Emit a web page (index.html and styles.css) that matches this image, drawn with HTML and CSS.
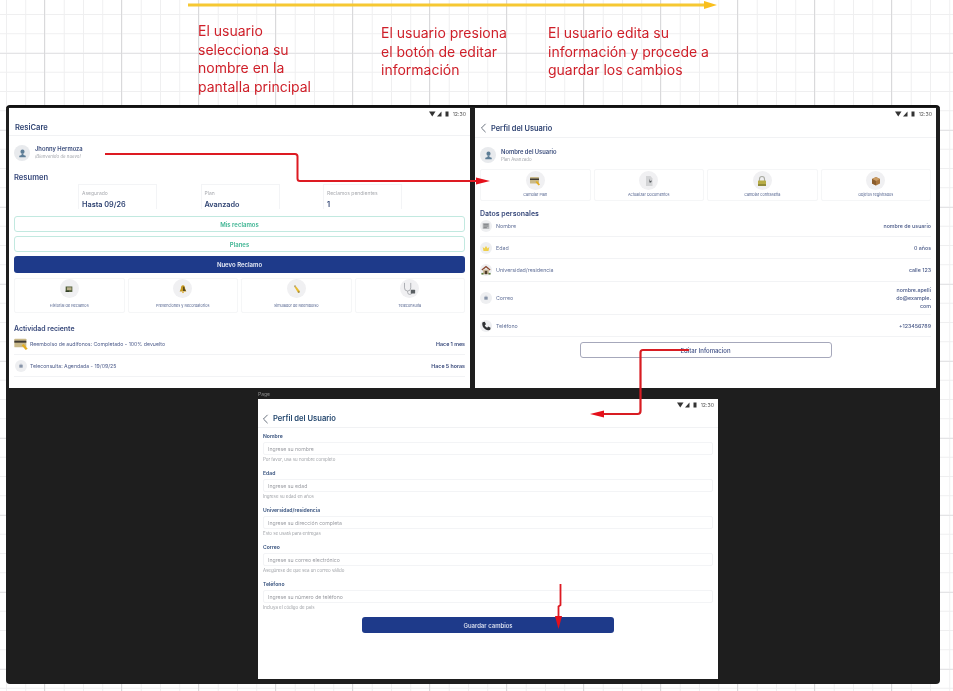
FILE: index.html
```html
<!DOCTYPE html>
<html lang="es">
<head>
    <meta charset="UTF-8">
    <meta name="viewport" content="width=device-width, initial-scale=1.0">
    <title>Flujo editar perfil</title>
    <link rel="stylesheet" href="styles.css">
</head>
<body>
    <svg class="defs" width="0" height="0">
        <symbol id="i-user" viewBox="0 0 24 24"><circle cx="12" cy="8" r="4.5" fill="#5d7d96"/><path d="M10 12h4v3l5 2v3H5v-3l5-2z" fill="#5d7d96"/></symbol>
        <symbol id="i-book" viewBox="0 0 24 24"><rect x="4" y="6" width="16" height="13" fill="#4c5a35"/><rect x="7" y="8" width="11" height="7" fill="#b9b08c"/><rect x="4" y="16" width="8" height="3" fill="#2e3a26"/></symbol>
        <symbol id="i-bell" viewBox="0 0 24 24"><path d="M12 3c4 0 5 4 5 8l3 7H4l3-7c0-4 1-8 5-8z" fill="#c79a22"/><path d="M12 6v11h7l-3-6c0-3-1-5-4-5z" fill="#5a4a1c"/><circle cx="12" cy="20" r="2" fill="#d9a520"/></symbol>
        <symbol id="i-pencil" viewBox="0 0 24 24"><path d="M7 5l3-2 11 14-1 4-4-1z" fill="#e5b92f"/><path d="M7 5l3-2 2 2.5-3 2z" fill="#a8a39a"/><path d="M16 20l4-3 0 4z" fill="#6b5a2a"/></symbol>
        <symbol id="i-steth" viewBox="0 0 24 24"><path d="M4 3v8a5 5 0 0 0 10 0V3M9 16v2a3.500 3.500 0 0 0 7 0" fill="none" stroke="#a3a6aa" stroke-width="1.400"/><rect x="14" y="14" width="7" height="6" rx="1" fill="#5a5f63"/></symbol>
        <symbol id="i-card" viewBox="0 0 24 24"><rect x="2" y="4" width="18" height="13" rx="1" fill="#c9b98a"/><rect x="2" y="7" width="18" height="3" fill="#3f3a33"/><path d="M13 14l3-2 6 7-3 2z" fill="#e3ad1f"/></symbol>
        <symbol id="i-doc" viewBox="0 0 24 24"><path d="M6 2h9l4 5v15H6z" fill="#d3d4d6"/><path d="M12 7l2 5 4-1-2 4h-3z" fill="#55585c"/></symbol>
        <symbol id="i-lock" viewBox="0 0 24 24"><path d="M7 12V8a5 5 0 0 1 10 0v4" fill="none" stroke="#a9aaa0" stroke-width="2.200"/><rect x="4" y="11" width="16" height="11" rx="1" fill="#b8ad47"/><rect x="4" y="18" width="16" height="4" fill="#8f8a3a"/></symbol>
        <symbol id="i-box" viewBox="0 0 24 24"><path d="M12 4l8 4v9l-8 4-8-4V8z" fill="#a8743c"/><path d="M12 4l8 4-8 4-8-4z" fill="#c99b63"/><path d="M12 12v9l-8-4V8z" fill="#8a5c2c"/></symbol>
        <symbol id="i-lines" viewBox="0 0 24 24"><rect x="4" y="5" width="16" height="14" fill="#b9bbbe"/><path d="M6 8h12M6 12h12M6 16h8" stroke="#63666a" stroke-width="1.600"/></symbol>
        <symbol id="i-crown" viewBox="0 0 24 24"><path d="M4 9l4 4 4-6 4 6 4-4-2 10H6z" fill="#efcf4a"/></symbol>
        <symbol id="i-house" viewBox="0 0 24 24"><path d="M1 11L12 2l11 9-2 2-9-7-9 7z" fill="#8b4a32"/><rect x="5" y="11" width="14" height="11" fill="#cdbb9a"/><rect x="9" y="14" width="6" height="8" fill="#4d3b2a"/><rect x="1" y="19" width="5" height="4" fill="#5c7a3c"/><rect x="18" y="19" width="5" height="4" fill="#5c7a3c"/></symbol>
        <symbol id="i-dot" viewBox="0 0 24 24"><rect x="8" y="9" width="8" height="7" fill="#8794a8"/><path d="M9 9l3-2 3 2" fill="none" stroke="#8794a8"/></symbol>
        <symbol id="i-phone" viewBox="0 0 24 24"><path d="M4 3l5-1 3 6-3 2c1 3 3 5 6 6l2-3 6 3-1 5c-1 1-3 1-5 1C9 21 3 14 3 7c0-2 0-3 1-4z" fill="#2f3134"/></symbol>
        <symbol id="i-status" viewBox="0 0 20 6"><path d="M0 .500h6.500L3.250 5.500z" fill="#333"/><path d="M8 5.500l4.500-5v5z" fill="#333"/><rect x="16.500" y=".500" width="3" height="5" fill="#333"/></symbol>
    </svg>

    <div class="canvas">
        <p class="note note-a">El usuario<br>selecciona su<br>nombre en la<br>pantalla principal</p>
        <p class="note note-b">El usuario presiona<br>el botón de editar<br>información</p>
        <p class="note note-c">El usuario edita su<br>información y procede a<br>guardar los cambios</p>

        <div class="board">
            <span class="page-label">Page</span>

            <!-- pantalla principal -->
            <section class="screen screen-home">
                <div class="status"><svg class="status-icons"><use href="#i-status"/></svg><span>12:30</span></div>
                <header class="appbar appbar-home"><h1>ResiCare</h1></header>
                <div class="content">
                    <div class="user user-home">
                        <span class="avatar"><svg><use href="#i-user"/></svg></span>
                        <div>
                            <div class="user-name">Jhonny Hermoza</div>
                            <div class="user-sub user-sub-i">¡Bienvenido de nuevo!</div>
                        </div>
                    </div>
                    <h2 class="title title-resumen">Resumen</h2>
                    <div class="stats">
                        <div class="stat"><span>Asegurado</span><b>Hasta 09/26</b></div>
                        <div class="stat"><span>Plan</span><b>Avanzado</b></div>
                        <div class="stat"><span>Reclamos pendientes</span><b>1</b></div>
                    </div>
                    <div class="actions">
                        <a class="btn btn-teal">Mis reclamos</a>
                        <a class="btn btn-teal">Planes</a>
                        <a class="btn btn-navy btn-new">Nuevo Reclamo</a>
                    </div>
                    <div class="tiles tiles-home">
                        <div class="tile"><span class="tile-icon"><svg><use href="#i-book"/></svg></span><span>Historial de Reclamos</span></div>
                        <div class="tile"><span class="tile-icon"><svg><use href="#i-bell"/></svg></span><span>Prevenciones y Recordatorios</span></div>
                        <div class="tile"><span class="tile-icon"><svg><use href="#i-pencil"/></svg></span><span>Simulador de Reembolso</span></div>
                        <div class="tile"><span class="tile-icon tile-icon-lg"><svg><use href="#i-steth"/></svg></span><span>Teleconsulta</span></div>
                    </div>
                    <h2 class="title title-activity">Actividad reciente</h2>
                    <div class="activity activity-first">
                        <span class="activity-icon"><svg><use href="#i-card"/></svg></span>
                        <span class="activity-text">Reembolso de audífonos: Completado - 100% devuelto</span>
                        <b>Hace 1 mes</b>
                    </div>
                    <div class="activity">
                        <span class="activity-icon"><span class="small-circle"><svg><use href="#i-dot"/></svg></span></span>
                        <span class="activity-text">Teleconsulta: Agendada - 19/09/25</span>
                        <b>Hace 5 horas</b>
                    </div>
                </div>
            </section>

            <!-- perfil -->
            <section class="screen screen-profile">
                <div class="status"><svg class="status-icons"><use href="#i-status"/></svg><span>12:30</span></div>
                <header class="appbar appbar-back"><svg class="back" viewBox="0 0 8 12"><path d="M6.500 1L1.500 6l5 5" fill="none" stroke="#5b6472" stroke-width="1.100"/></svg><h1>Perfil del Usuario</h1></header>
                <div class="content">
                    <div class="user user-profile">
                        <span class="avatar"><svg><use href="#i-user"/></svg></span>
                        <div>
                            <div class="user-name">Nombre del Usuario</div>
                            <div class="user-sub">Plan Avanzado</div>
                        </div>
                    </div>
                    <div class="tiles tiles-profile">
                        <div class="tile"><span class="tile-icon"><svg><use href="#i-card"/></svg></span><span>Cambiar Plan</span></div>
                        <div class="tile"><span class="tile-icon"><svg><use href="#i-doc"/></svg></span><span>Actualizar Documentos</span></div>
                        <div class="tile"><span class="tile-icon"><svg><use href="#i-lock"/></svg></span><span>Cambiar contraseña</span></div>
                        <div class="tile"><span class="tile-icon"><svg><use href="#i-box"/></svg></span><span>Objetos registrados</span></div>
                    </div>
                    <h2 class="title title-data">Datos personales</h2>
                    <div class="data-row data-first"><span class="small-circle"><svg><use href="#i-lines"/></svg></span><span class="data-key">Nombre</span><span class="data-val">nombre de usuario</span></div>
                    <div class="data-row"><span class="small-circle"><svg><use href="#i-crown"/></svg></span><span class="data-key">Edad</span><span class="data-val">0 años</span></div>
                    <div class="data-row data-tall"><span class="small-circle"><svg><use href="#i-house"/></svg></span><span class="data-key">Universidad/residencia</span><span class="data-val">calle 123</span></div>
                    <div class="data-row data-mail"><span class="small-circle"><svg><use href="#i-dot"/></svg></span><span class="data-key">Correo</span><span class="data-val">nombre.apelli<br>do@example.<br>com</span></div>
                    <div class="data-row"><span class="small-circle"><svg><use href="#i-phone"/></svg></span><span class="data-key">Teléfono</span><span class="data-val">+123456789</span></div>
                    <a class="btn btn-outline">Editar Infomacion</a>
                </div>
            </section>

            <!-- editar -->
            <section class="screen screen-edit">
                <div class="status"><svg class="status-icons"><use href="#i-status"/></svg><span>12:30</span></div>
                <header class="appbar appbar-back appbar-edit"><svg class="back" viewBox="0 0 8 12"><path d="M6.500 1L1.500 6l5 5" fill="none" stroke="#5b6472" stroke-width="1.100"/></svg><h1>Perfil del Usuario</h1></header>
                <form class="form">
                    <div class="field"><label>Nombre</label><input placeholder="Ingrese su nombre"><small>Por favor, usa su nombre completo</small></div>
                    <div class="field"><label>Edad</label><input placeholder="Ingrese su edad"><small>Ingrese su edad en años</small></div>
                    <div class="field"><label>Universidad/residencia</label><input placeholder="Ingrese su dirección completa"><small>Esto se usará para entregas</small></div>
                    <div class="field"><label>Correo</label><input placeholder="Ingrese su correo electrónico"><small>Asegúrese de que sea un correo válido</small></div>
                    <div class="field"><label>Teléfono</label><input placeholder="Ingrese su número de teléfono"><small>Incluya el código de país</small></div>
                    <a class="btn btn-navy btn-save">Guardar cambios</a>
                </form>
            </section>
        </div>

        <!-- flechas del flujo -->
        <svg class="arrows" width="953" height="691" viewBox="0 0 953 691">
            <path d="M188 5H706" stroke="#f6c832" stroke-width="3" fill="none"/>
            <path d="M704 1l13 4-13 4z" fill="#f9bf1d"/>
            <path d="M105 154H295q2.500 0 2.500 2.500V178.500q0 2.500 2.500 2.500H478" stroke="#dd1a22" stroke-width="2" fill="none"/>
            <path d="M476 177.500l14 3.500-14 3.500z" fill="#e5101b"/>
            <path d="M689 350H643q-2.500 0-2.500 2.500V411q0 3-3 3H602" stroke="#d81c22" stroke-width="2.200" fill="none"/>
            <path d="M604 410.500l-14 3.500 14 3.500z" fill="#e5101b"/>
            <path d="M560.500 584V605l-2 1.500V618" stroke="#dd1a22" stroke-width="1.800" fill="none"/>
            <path d="M555 616l3.500 13 3.500-13z" fill="#e5101b"/>
        </svg>
    </div>
</body>
</html>
```

FILE: styles.css
```css
* { box-sizing: border-box; }
html, body { margin: 0; height: 691px; overflow: hidden; background: #fff; font-family: Inter, "Liberation Sans", sans-serif; }
h1, h2, p { margin: 0; }
.defs { position: absolute; }

/* lienzo con cuadricula */
.canvas {
    position: relative;
    width: 953px;
    height: 691px;
    filter: blur(0.5px);
    background-color: #fff;
    background-image:
        linear-gradient(to right, #d9d9db 1px, transparent 1px),
        linear-gradient(to bottom, #e4e4e6 1px, transparent 1px),
        linear-gradient(to right, #efeff0 1px, transparent 1px),
        linear-gradient(to bottom, #efeff0 1px, transparent 1px);
    background-size: 77px 77px, 77px 77px, 19.25px 19.25px, 19.25px 19.25px;
    background-position: 44px 0, 0 53px, 6px 0, 0 14px;
}

.note { position: absolute; color: #cf1f29; font-size: 14px; line-height: 18.7px; white-space: nowrap; }
.note-a { left: 198px; top: 22px; }
.note-b { left: 381px; top: 24px; }
.note-c { left: 548px; top: 24px; }

.arrows { position: absolute; left: 0; top: 0; pointer-events: none; }

.board { position: absolute; left: 6px; top: 105px; width: 934px; height: 579px; background: #1e1e1e; border-radius: 4px; border-top: 2px solid #111; }
.page-label { position: absolute; left: 252px; top: 284px; font-size: 5px; color: #8a8a8a; }
.screen { position: absolute; background: #fff; height: 280px; width: 461px; overflow: hidden; }
.screen-home { left: 3px; top: 1px; }
.screen-profile { left: 469px; top: 1px; width: 461px; }
.screen-edit { left: 252px; top: 292px; width: 460px; }

.status { height: 11px; display: flex; justify-content: flex-end; align-items: center; gap: 4px; padding: 0 4px; font-size: 5.200px; color: #555; }
.status-icons { width: 20px; height: 6px; }
.appbar { display: flex; align-items: center; border-bottom: 1px solid #f1f2f4; color: #2f4372; }
.appbar h1 { font-size: 7.400px; font-weight: 600; }
.appbar-home { height: 17px; padding-left: 6px; }
.appbar-home h1 { font-size: 7.600px; }
.appbar-back { height: 19px; padding-left: 5px; gap: 4px; }
.appbar-edit { height: 18px; padding-left: 4px; gap: 4px; }
.appbar-edit h1 { font-size: 7.600px; color: #24476e; }
.back { width: 7px; height: 10px; }

.content { padding: 0 5px; }
.user { display: flex; align-items: center; gap: 5px; height: 16px; }
.user-home { margin-top: 9px; }
.user-profile { margin-top: 9px; padding-top: 0; }
.user-profile > div { padding-top: 2px; }
.avatar { width: 16px; height: 16px; border-radius: 50%; background: #e8eaed; display: flex; align-items: center; justify-content: center; }
.avatar svg { width: 11px; height: 11px; }
.user-name { font-size: 5.800px; font-weight: 600; color: #3b4d7c; line-height: 8px; }
.user-sub { font-size: 4.400px; color: #a4a7ad; line-height: 8px; }
.user-sub-i { font-style: italic; }

.title { font-size: 7.600px; font-weight: 600; color: #37487a; line-height: 10px; }
.title-resumen { margin-top: 12px; }
.title-activity { margin-top: 11px; font-size: 6.900px; }
.title-data { margin-top: 8px; font-size: 7px; }

.stats { display: flex; justify-content: space-between; margin-top: 1px; padding: 0 63px 0 64px; }
.stat { width: 79px; height: 25px; border: 1px solid #f3f4f6; border-bottom: 0; padding: 5px 3px 0; display: flex; flex-direction: column; gap: 4px; }
.stat span { font-size: 5px; color: #a9abb0; line-height: 6px; }
.stat b { font-size: 7.300px; font-weight: 600; color: #2f4372; line-height: 9px; }

.actions { margin-top: 7px; display: flex; flex-direction: column; gap: 4px; }
.btn { display: flex; align-items: center; justify-content: center; height: 16px; border-radius: 3px; font-size: 6px; font-weight: 600; }
.btn-teal { border: 1.500px solid #c2e9e0; color: #3fb593; }
.btn-navy { background: #1e3a8a; color: #e8ecf6; }
.btn-new { height: 17px; }
.btn-outline { width: 252px; margin: 5px auto 0; border: 1px solid #a6a8bb; color: #3f4f85; font-size: 6px; font-weight: 500; }
.btn-save { width: 252px; margin: 1px auto 0; font-weight: 500; }

.tiles { display: grid; grid-template-columns: repeat(4, 1fr); gap: 3px; }
.tiles-home { margin-top: 5px; }
.tiles-profile { margin-top: 6px; }
.tile { border: 1px solid #f5f6f7; border-radius: 2px; display: flex; flex-direction: column; align-items: center; font-size: 3.800px; line-height: 6px; color: #54648f; }
.tiles-home .tile { height: 35px; gap: 5px; }
.tiles-profile .tile { height: 32px; padding-top: 1px; gap: 2px; }
.tile-icon { width: 19px; height: 19px; border-radius: 50%; background: #f0f0f2; display: flex; align-items: center; justify-content: center; }
.tile-icon svg { width: 10px; height: 10px; }
.tiles-profile .tile-icon svg { width: 12px; height: 12px; }
.tile-icon-lg svg { width: 15px; height: 15px; }

.activity { display: flex; align-items: center; height: 22px; border-bottom: 1px solid #f2f3f5; font-size: 5.200px; color: #4c5b8a; }
.activity-first { height: 21px; }
.activity-icon { width: 16px; height: 14px; flex: none; display: flex; align-items: center; }
.activity-icon > svg { width: 16px; height: 16px; margin-left: -1px; }
.activity-text { flex: 1; }
.activity b { font-weight: 600; font-size: 5.300px; color: #37487a; }
.small-circle { width: 12px; height: 12px; flex: none; border-radius: 50%; background: #eeeff1; display: flex; align-items: center; justify-content: center; }
.small-circle svg { width: 10px; height: 10px; }
.activity .small-circle { margin-left: 1px; }

.data-row { display: flex; align-items: center; height: 22px; border-bottom: 1px solid #f2f3f5; font-size: 5.300px; color: #606f97; }
.data-first { height: 18px; align-items: flex-start; padding-top: 1px; }
.data-first .data-key, .data-first .data-val { line-height: 12px; }
.data-tall { height: 23px; }
.data-mail { height: 33px; }
.data-key { flex: 1; margin-left: 4px; }
.data-val { text-align: right; font-weight: 500; color: #4a5a88; line-height: 8px; }

.form { padding: 3px 5px 0; display: flex; flex-direction: column; gap: 3px; }
.field { height: 34px; display: flex; flex-direction: column; }
.field label { font-size: 5.100px; font-weight: 600; color: #35507c; line-height: 10px; }
.field input { width: 100%; height: 14px; margin-top: 1px; padding: 0 4px; border: 1px solid #f3f4f6; border-radius: 2px; font: 5.200px Inter, "Liberation Sans", sans-serif; outline: none; }
.field input::placeholder { color: #9a9ca2; }
.field small { font-size: 4.400px; color: #a0a3a8; line-height: 10px; }
```
